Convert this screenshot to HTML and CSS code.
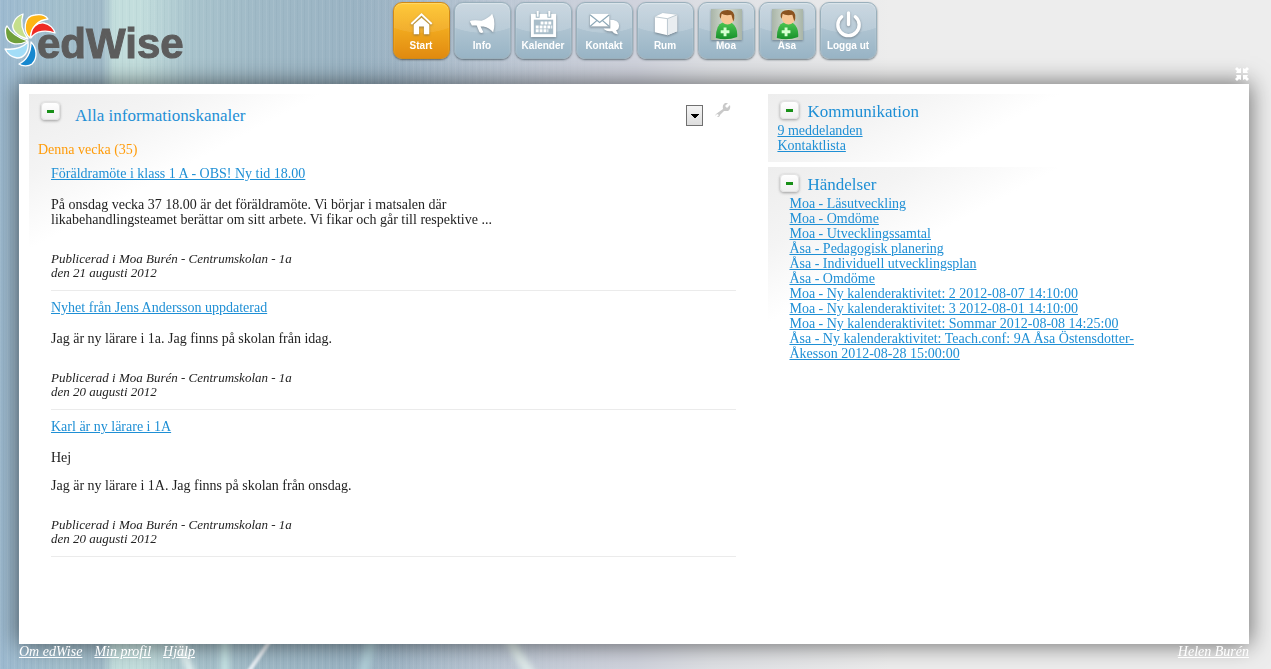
FILE: index.html
```html
<!DOCTYPE html>
<html lang="sv">
<head>
<meta charset="utf-8">
<title>edWise</title>
<link rel="stylesheet" href="styles.css">
</head>
<body>
<svg class="backdrop" viewBox="0 0 1271 669" preserveAspectRatio="none" aria-hidden="true">
  <defs>
    <filter id="soft" filterUnits="userSpaceOnUse" x="0" y="600" width="600" height="90"><feGaussianBlur stdDeviation="3"/></filter>
    <filter id="thin" filterUnits="userSpaceOnUse" x="0" y="600" width="600" height="90"><feGaussianBlur stdDeviation="1"/></filter>
  </defs>
  <path d="M176 630Q182 650 192 675" stroke="#eaf8f6" stroke-width="7" fill="none" filter="url(#soft)"/>
  <path d="M225 630V675" stroke="#c9e6e6" stroke-width="8" filter="url(#soft)"/>
  <path d="M272 638L247 674" stroke="#e9f0f5" stroke-width="4" filter="url(#thin)"/>
  <path d="M374 630L363 675" stroke="#b0cfd8" stroke-width="10" filter="url(#soft)"/>
  <path d="M506 630Q516 655 532 675" stroke="#dfebea" stroke-width="10" fill="none" filter="url(#soft)"/>
</svg>

<div class="page">
  <header class="top">
    <a class="logo" href="#" aria-label="edWise">
      <svg class="pinwheel" viewBox="3 12 56 56" aria-hidden="true">
        <g stroke="#fff" stroke-width="1.3" stroke-linejoin="round">
          <path fill="#fdb515" d="M30 38C23 32 23 16 35 15C41 14 46 16 48 19C39 20 32 26 30 38Z"/>
          <path fill="#ee2a24" d="M31 38C30 27 38 22 44 23C50 24 54 29 55 33C47 30 36 30 31 38Z"/>
          <path fill="#c5df8c" d="M28 39C16 36 10 29 14 22C16 17 20 15 23 14C20 23 22 31 28 39Z"/>
          <path fill="#6f9f3a" d="M28 41C16 47 7 43 6 36C5 31 5 28 7 26C11 33 18 38 28 41Z"/>
          <path fill="#a3ddf7" d="M28 42C29 52 24 58 17 58C11 57 7 53 5 49C14 50 22 48 28 42Z"/>
          <path fill="#1688cf" d="M31 42C37 48 38 58 32 64C28 67 22 66 19 64C27 60 31 53 31 42Z"/>
        </g>
      </svg>
      <span class="wordmark">edWise</span>
    </a>
    <nav class="menu" aria-label="Huvudmeny">
      <a class="tile active" href="#">
        <svg viewBox="0 0 32 32" aria-hidden="true"><path fill="#fff" d="M16 9L24 16V26H18.500V18H13.500V26H8V16Z"/><path fill="none" stroke="#fff" stroke-width="2" d="M5.500 15.500L16 5.500L26.500 15.500"/></svg>
        <span>Start</span></a>
      <a class="tile" href="#">
        <svg viewBox="0 0 32 32" aria-hidden="true"><path fill="#fff" d="M3 13Q4 11 15 12Q22 10 26 5Q30 14 27 24Q23 19 17 18H14L17 24Q13 26 12 22L10 17L5 17Z"/></svg>
        <span>Info</span></a>
      <a class="tile" href="#">
        <svg viewBox="0 0 32 32" aria-hidden="true"><path fill="#fff" d="M3 5H29V29H3Z"/><path fill="#a9bdc9" d="M6 11H26V26H6Z"/><path stroke="#9fb5c1" stroke-width="4" d="M10 4V9M22 4V9"/><path stroke="#fff" stroke-width="2" d="M10 2V8M22 2V8"/><path stroke="#fff" stroke-width="3" stroke-dasharray="3 1" d="M13 14.500H25M8 18.500H25M8 22.500H21"/></svg>
        <span>Kalender</span></a>
      <a class="tile" href="#">
        <svg viewBox="0 0 32 32" aria-hidden="true"><path fill="#fff" d="M21 11Q31 11 31 17Q31 21 28 22L30 26Q26 26 24 23Q17 23 15 20H22V11Z"/><path fill="#fff" d="M1 5H21V18H1Z"/><path fill="none" stroke="#8da8b7" stroke-width="1.300" d="M1 6L11 14L21 6M1 18L8 12M21 18L14 12"/></svg>
        <span>Kontakt</span></a>
      <a class="tile" href="#">
        <svg viewBox="0 0 32 32" aria-hidden="true"><path fill="#fff" d="M5 8L13 4L28 6V23L18 27L5 24Z"/><path fill="#e9edf0" d="M18 10L28 6V23L18 27Z"/><path fill="none" stroke="#bcc8cf" d="M5 8L18 10L28 6M18 10V27"/></svg>
        <span>Rum</span></a>
      <a class="tile" href="#">
        <svg viewBox="0 0 32 32" aria-hidden="true"><use href="#person"/></svg>
        <span>Moa</span></a>
      <a class="tile" href="#">
        <svg viewBox="0 0 32 32" aria-hidden="true"><use href="#person"/></svg>
        <span>Åsa</span></a>
      <a class="tile" href="#">
        <svg viewBox="0 0 32 32" aria-hidden="true"><path fill="none" stroke="#fff" stroke-width="3.500" stroke-linecap="round" d="M16 4V16M9 8A11 11 0 1 0 23 8"/></svg>
        <span>Logga ut</span></a>
    </nav>
    <button class="shrink" type="button" aria-label="Minimera">
      <svg viewBox="0 0 14 14" aria-hidden="true"><path fill="#fff" d="M0 2L2 0L4 2L6 1V6H1L2 4ZM14 2L12 0L10 2L8 1V6H13L12 4ZM0 12L2 14L4 12L6 13V8H1L2 10ZM14 12L12 14L10 12L8 13V8H13L12 10Z"/></svg>
    </button>
  </header>

  <main class="sheet">
    <section class="channels">
      <div class="channels-head">
        <button class="toggle" type="button" aria-label="Fäll ihop"></button>
        <h2>Alla informationskanaler</h2>
        <select class="picker" aria-label="Välj kanal"><option>Alla</option></select>
        <button class="wrench" type="button" aria-label="Inställningar">
          <svg viewBox="0 0 16 16" aria-hidden="true"><path fill="#c9c9c9" d="M1 12L8 7Q7 3 10 1L13 1L10 4L12 6L15 3Q16 7 13 9L9 9L5 13Q5 15 2 15L4 13L2 12L0 14Z"/></svg>
        </button>
      </div>
      <h3 class="week">Denna vecka (35)</h3>
      <article class="post">
        <a href="#">Föräldramöte i klass 1 A - OBS! Ny tid 18.00</a>
        <p>På onsdag vecka 37 18.00 är det föräldramöte. Vi börjar i matsalen där<br>likabehandlingsteamet berättar om sitt arbete. Vi fikar och går till respektive ...</p>
        <footer>Publicerad i Moa Burén - Centrumskolan - 1a<br>den 21 augusti 2012</footer>
      </article>
      <article class="post">
        <a href="#">Nyhet från Jens Andersson uppdaterad</a>
        <p>Jag är ny lärare i 1a. Jag finns på skolan från idag.</p>
        <footer>Publicerad i Moa Burén - Centrumskolan - 1a<br>den 20 augusti 2012</footer>
      </article>
      <article class="post">
        <a href="#">Karl är ny lärare i 1A</a>
        <p>Hej</p>
        <p>Jag är ny lärare i 1A. Jag finns på skolan från onsdag.</p>
        <footer>Publicerad i Moa Burén - Centrumskolan - 1a<br>den 20 augusti 2012</footer>
      </article>
    </section>

    <aside class="side">
      <section class="box">
        <div class="box-head"><button class="toggle" type="button" aria-label="Fäll ihop"></button><h2>Kommunikation</h2></div>
        <ul class="links">
          <li><a href="#">9 meddelanden</a></li>
          <li><a href="#">Kontaktlista</a></li>
        </ul>
      </section>
      <section class="box">
        <div class="box-head"><button class="toggle" type="button" aria-label="Fäll ihop"></button><h2>Händelser</h2></div>
        <ul class="links events">
          <li><a href="#">Moa - Läsutveckling</a></li>
          <li><a href="#">Moa - Omdöme</a></li>
          <li><a href="#">Moa - Utvecklingssamtal</a></li>
          <li><a href="#">Åsa - Pedagogisk planering</a></li>
          <li><a href="#">Åsa - Individuell utvecklingsplan</a></li>
          <li><a href="#">Åsa - Omdöme</a></li>
          <li><a href="#">Moa - Ny kalenderaktivitet: 2 2012-08-07 14:10:00</a></li>
          <li><a href="#">Moa - Ny kalenderaktivitet: 3 2012-08-01 14:10:00</a></li>
          <li><a href="#">Moa - Ny kalenderaktivitet: Sommar 2012-08-08 14:25:00</a></li>
          <li><a href="#">Åsa - Ny kalenderaktivitet: Teach.conf: 9A Åsa Östensdotter-<br>Åkesson 2012-08-28 15:00:00</a></li>
        </ul>
      </section>
    </aside>
  </main>

  <footer class="bottom">
    <a href="#">Om edWise</a>
    <a href="#">Min profil</a>
    <a href="#">Hjälp</a>
    <a class="user" href="#">Helen Burén</a>
  </footer>
</div>

<svg class="symbols" aria-hidden="true">
  <defs>
    <linearGradient id="shirt" x1="0" y1="0" x2="0" y2="1"><stop offset="0" stop-color="#4cc552"/><stop offset="1" stop-color="#17902a"/></linearGradient>
    <linearGradient id="photo" x1="0" y1="0" x2="1" y2="0"><stop offset="0" stop-color="#a9b5a8"/><stop offset=".5" stop-color="#d5dcd2"/><stop offset="1" stop-color="#a9b5a8"/></linearGradient>
    <symbol id="person" viewBox="0 0 32 32">
      <path fill="url(#photo)" d="M0 0H32V32H0Z"/>
      <path fill="url(#shirt)" d="M5 30Q5 16 12 14H21Q28 19 27 29Q16 33 5 30Z"/>
      <ellipse cx="17" cy="9" rx="7" ry="7" fill="#f8c795"/>
      <path fill="#8b531f" d="M9 8Q8 1 17 1Q25 1 24 10L23 13L21 6Q14 7 11 5L10 10Z"/>
      <path fill="#d5ffd0" d="M13 19H16V22H19V25H16V28H13V25H10V22H13Z"/>
    </symbol>
  </defs>
</svg>
</body>
</html>
```
FILE: styles.css
```css
* { box-sizing: border-box; }

body {
  margin: 0;
  font-family: Georgia, "Liberation Serif", serif;
  font-size: 14px;
  line-height: 15px;
  color: #222;
  background:
    linear-gradient(90deg, transparent 28%, #d0d3dd 50%, #dee0e4 56%, #ededed 70%),
    repeating-linear-gradient(90deg, rgba(255, 255, 255, .07) 0 1px, transparent 1px 3px, rgba(60, 90, 110, .05) 3px 4px, transparent 4px 7px),
    linear-gradient(90deg, #9dbad0 0, #a3bfcc 5%, #a0bac8 8%, #c3dedd 9%, #c3dedd 11%, #a9c4cd 15%, #a0bac7 20%, #98b1c2 31%, #a8bccc 40%, #bdc8d4 50%);
}

h2, h3, p, ul { margin: 0; padding: 0; font-weight: normal; }
ul { list-style: none; }
a { color: #1e8fd5; }
button { padding: 0; border: 0; background: none; font: inherit; }
svg { display: block; }

.symbols { position: absolute; width: 0; height: 0; }
.backdrop { position: fixed; inset: 0; width: 100%; height: 100%; z-index: -1; }

.page { display: flex; flex-direction: column; min-height: 100vh; overflow: hidden; }

.top {
  position: relative;
  z-index: 1;
  display: grid;
  grid-template-columns: 1fr auto 1fr;
  align-items: start;
  height: 84px;
  padding: 2px 5px 0 3px;
}
.logo { display: flex; padding-top: 10px; text-decoration: none; }
.pinwheel { width: 56px; height: 56px; }
.wordmark {
  margin-left: -22px;
  padding-top: 12px;
  font: bold 42px/40px "Liberation Sans", Arial, sans-serif;
  color: #5c5c5c;
  -webkit-text-stroke: 1px #5c5c5c;
}

.menu { display: flex; gap: 4px; }
.tile {
  display: flex;
  flex-direction: column;
  align-items: center;
  width: 57px;
  height: 57px;
  padding-top: 6px;
  border-radius: 9px;
  border: 1px solid #9ab0bc;
  background:
    radial-gradient(ellipse 50px 30px at 50% 0, rgba(255, 255, 255, .15) 98%, transparent),
    linear-gradient(#c2d1dc, #98b4c5);
  box-shadow: inset 0 1px 1px #dce6ec, 0 1px 2px rgba(60, 75, 85, .7);
  color: #fff;
  font: bold 10px/12px "Liberation Sans", Arial, sans-serif;
  text-decoration: none;
  white-space: nowrap;
}
.tile.active {
  border-color: #d18a16;
  background:
    radial-gradient(ellipse 50px 30px at 50% 0, rgba(255, 255, 255, .08) 98%, transparent),
    linear-gradient(#ffc52a, #e18a10);
  box-shadow: inset 0 1px 1px #ffd96b, 0 1px 2px rgba(60, 60, 60, .7);
}
.tile svg { width: 31px; height: 31px; filter: drop-shadow(0 1px 1px rgba(70, 80, 90, .55)); }

.shrink { justify-self: end; align-self: end; margin-right: 17px; padding-bottom: 3px; }
.shrink svg { width: 14px; height: 14px; }

.sheet {
  flex: 1;
  display: grid;
  grid-template-columns: 11fr 7fr;
  margin: 0 22px 0 19px;
  padding: 10px;
  background: #fff;
  box-shadow: 0 0 22px 1px rgba(0, 0, 0, .55);
}

h2 { font-size: 17px; line-height: 20px; color: #1e8fd5; }

.toggle {
  flex: none;
  display: grid;
  place-items: center;
  width: 19px;
  height: 18px;
  border: 1px solid #e3e3e3;
  border-radius: 4px;
  background: linear-gradient(#fff, #f0f0f0);
  box-shadow: 0 1px 3px rgba(0, 0, 0, .35);
}
.toggle::before { content: ""; width: 7px; height: 3px; background: #189018; }

.channels,
.box {
  background: linear-gradient(152deg, #ededed 0, #f4f4f4 25%, #fff 48%) no-repeat 0 0 / 300px 165px;
}
.channels { padding: 8px 32px 0 9px; }
.channels-head { display: flex; align-items: flex-start; padding: 0 5px 0 3px; height: 40px; }
.channels-head h2 { flex: 1; padding: 4px 0 0 15px; }
.picker {
  appearance: none;
  width: 17px;
  height: 21px;
  margin-top: 3px;
  border: 1px solid #707070;
  border-radius: 0;
  color: transparent;
  background:
    linear-gradient(45deg, transparent 50%, #000 50%) no-repeat 4px 8px / 4px 4px,
    linear-gradient(315deg, transparent 50%, #000 50%) no-repeat 8px 8px / 4px 4px,
    linear-gradient(#f4f4f4, #ddd);
}
.wrench { margin-left: 12px; }
.wrench svg { width: 16px; height: 16px; }

.week { font-size: 14px; line-height: 15px; color: #ff9c0a; }

.post { margin-left: 13px; padding: 9px 0 10px; border-bottom: 1px solid #ebebeb; }
.post p { margin-top: 16px; }
.post p + p { margin-top: 13px; }
.post footer { margin-top: 25px; font-size: 13px; line-height: 14px; font-style: italic; }

.side { display: flex; flex-direction: column; gap: 5px; }
.box { padding: 7px 9px 9px; }
.box-head { display: flex; padding-left: 3px; height: 22px; }
.box-head h2 { padding: 1px 0 0 8px; }
.links.events { padding-left: 12px; }

.bottom { display: flex; gap: 12px; height: 25px; margin: 0 22px 0 19px; font-style: italic; position: relative; }
.bottom a { color: #fff; }
.bottom .user { margin-left: auto; }
```
